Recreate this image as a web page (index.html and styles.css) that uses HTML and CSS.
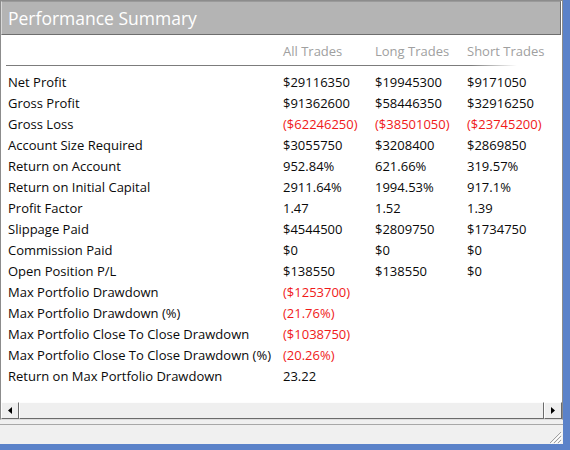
FILE: index.html
```html
<!DOCTYPE html>
<html>
<head>
<meta charset="utf-8">
<link rel="stylesheet" href="styles.css">
</head>
<body>
<div class="window">
  <div class="panel">
    <div class="titlebar">Performance Summary</div>
    <div class="table">
      <div class="row head"><span></span><span>All Trades</span><span>Long Trades</span><span>Short Trades</span></div>
      <div class="divider"></div>
      <div class="row"><span>Net Profit</span><span>$29116350</span><span>$19945300</span><span>$9171050</span></div>
      <div class="row"><span>Gross Profit</span><span>$91362600</span><span>$58446350</span><span>$32916250</span></div>
      <div class="row"><span>Gross Loss</span><span class="neg">($62246250)</span><span class="neg">($38501050)</span><span class="neg">($23745200)</span></div>
      <div class="row"><span>Account Size Required</span><span>$3055750</span><span>$3208400</span><span>$2869850</span></div>
      <div class="row"><span>Return on Account</span><span>952.84%</span><span>621.66%</span><span>319.57%</span></div>
      <div class="row"><span>Return on Initial Capital</span><span>2911.64%</span><span>1994.53%</span><span>917.1%</span></div>
      <div class="row"><span>Profit Factor</span><span>1.47</span><span>1.52</span><span>1.39</span></div>
      <div class="row"><span>Slippage Paid</span><span>$4544500</span><span>$2809750</span><span>$1734750</span></div>
      <div class="row"><span>Commission Paid</span><span>$0</span><span>$0</span><span>$0</span></div>
      <div class="row"><span>Open Position P/L</span><span>$138550</span><span>$138550</span><span>$0</span></div>
      <div class="row"><span>Max Portfolio Drawdown</span><span class="neg">($1253700)</span><span></span><span></span></div>
      <div class="row"><span>Max Portfolio Drawdown (%)</span><span class="neg">(21.76%)</span><span></span><span></span></div>
      <div class="row"><span>Max Portfolio Close To Close Drawdown</span><span class="neg">($1038750)</span><span></span><span></span></div>
      <div class="row"><span>Max Portfolio Close To Close Drawdown (%)</span><span class="neg">(20.26%)</span><span></span><span></span></div>
      <div class="row"><span>Return on Max Portfolio Drawdown</span><span>23.22</span><span></span><span></span></div>
    </div>
    <div class="hscroll">
      <div class="sbtn"><svg width="4" height="7" viewBox="0 0 4 7"><polygon points="4,0 4,7 0,3.5" fill="#000"/></svg></div>
      <div class="thumb"></div>
      <div class="sbtn"><svg width="4" height="7" viewBox="0 0 4 7"><polygon points="0,0 0,7 4,3.5" fill="#000"/></svg></div>
    </div>
  </div>
  <div class="status">
    <svg class="grip" width="13" height="13" viewBox="0 0 13 13">
      <path d="M12 1 L1 12 M12 5 L5 12 M12 9 L9 12" stroke="#a0a0a0" stroke-width="1"/>
      <path d="M13 2 L2 13 M13 6 L6 13 M13 10 L10 13" stroke="#ffffff" stroke-width="1"/>
    </svg>
  </div>
</div>
</body>
</html>
```
FILE: styles.css
```css
html, body {
  margin: 0;
  padding: 0;
}
body {
  background: #5b82c9;
  font-family: "Open Sans", "Noto Sans", sans-serif;
  font-size: 13px;
  color: #0a0a0a;
  width: 570px;
  height: 450px;
  overflow: hidden;
}
.window {
  width: 563px;
  height: 444px;
  background: #f0f0f0;
  display: flex;
  flex-direction: column;
}
.panel {
  height: 420px;
  box-sizing: border-box;
  background: #fff;
  border: 1px solid #8c8c8c;
  border-bottom: 1px solid #dcdcdc;
  display: flex;
  flex-direction: column;
}
.titlebar {
  height: 34px;
  box-sizing: border-box;
  margin-right: 1px;
  background: #b4b4b4;
  border: 1px solid #6e6e6e;
  border-top-color: #9a9a9a;
  border-left-color: #d8d8d8;
  color: #fff;
  font-size: 17.5px;
  line-height: 32px;
  padding-left: 6px;
}
.table {
  flex: 1;
  padding: 5px 0 0 7px;
}
.row {
  display: grid;
  grid-template-columns: 275px 92px 92px 1fr;
  height: 21px;
  align-items: center;
  white-space: nowrap;
}
.row.head {
  color: #a0a0a0;
}
.neg {
  color: #f01a1a;
}
.divider {
  height: 1px;
  width: 511px;
  margin: 4px 0 5px -2px;
  background: linear-gradient(to right, #7c7c7c 0, #7c7c7c 465px, rgba(124,124,124,0) 511px);
}
.hscroll {
  height: 17px;
  display: flex;
  background: #f0f0f0;
}
.sbtn, .thumb {
  box-sizing: border-box;
  height: 17px;
  border: 1px solid;
  border-color: #fdfdfd #6b6b6b #6b6b6b #fdfdfd;
  background: #efefef;
}
.sbtn {
  width: 18px;
  display: flex;
  align-items: center;
  justify-content: center;
}
.thumb {
  flex: 1;
}
.status {
  position: relative;
  height: 19px;
  margin-top: 4px;
  border-top: 1px solid #a8a8a8;
}
.grip {
  position: absolute;
  right: 1px;
  bottom: 0;
}
```
